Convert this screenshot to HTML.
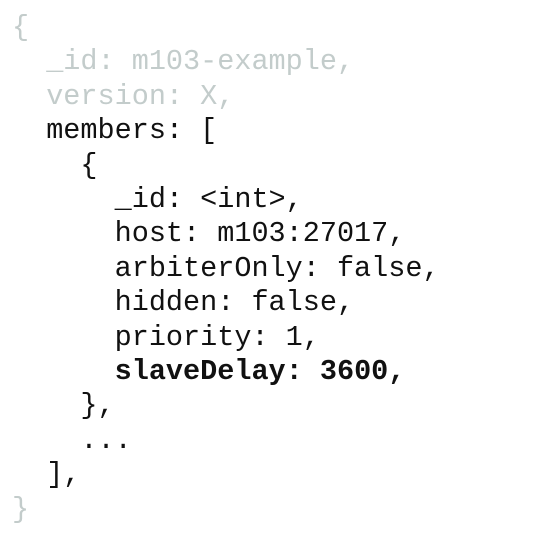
<!DOCTYPE html>
<html><head><style>
html,body{margin:0;padding:0;background:#fff;width:552px;height:537px;overflow:hidden}
pre{margin:0;position:absolute;left:12px;top:11px;font-family:"Liberation Mono",monospace;font-size:28.5px;line-height:34.4px;color:#111;letter-spacing:0px}
.g{color:#c3cccb}
b{font-weight:bold}
</style></head><body>
<pre><span class="g">{
  _id: m103-example,
  version: X,</span>
  members: [
    {
      _id: &lt;int&gt;,
      host: m103:27017,
      arbiterOnly: false,
      hidden: false,
      priority: 1,
      <b>slaveDelay: 3600,</b>
    },
    ...
  ],
<span class="g">}</span></pre>
</body></html>
